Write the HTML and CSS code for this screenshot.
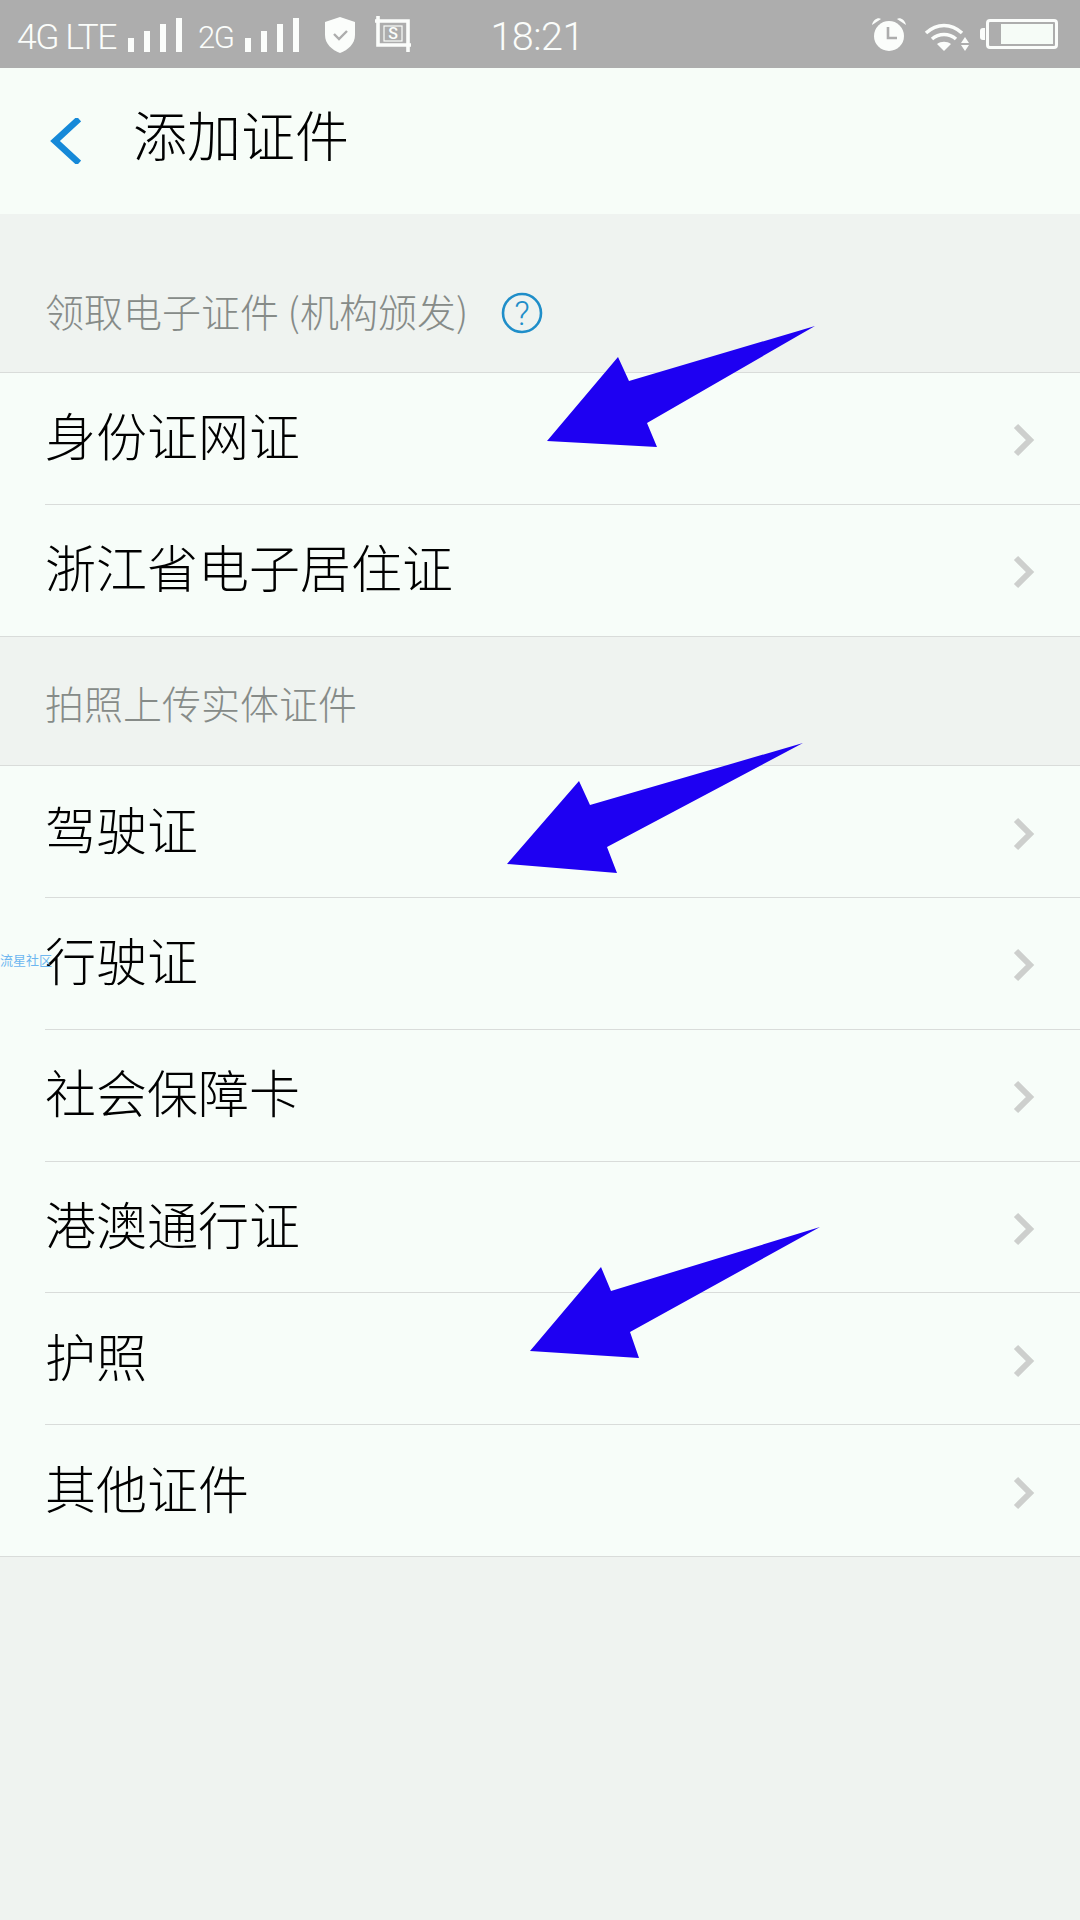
FILE: index.html
```html
<!DOCTYPE html>
<html lang="zh-CN">
  <head>
    <meta charset="UTF-8" />
    <title>添加证件</title>
    <link rel="stylesheet" href="styles.css">
  </head>
  <body>
    <div class="statusbar">
      <div class="status-left">
        <span class="net">4G LTE</span>
        <svg class="bars" viewBox="0 0 54 34"><path d="M0 20h6v14H0zM16 13h6v21h-6zM32 6h6v28h-6zM48 0h6v34h-6z"/></svg>
        <span class="net net2">2G</span>
        <svg class="bars" viewBox="0 0 54 34"><path d="M0 20h6v14H0zM16 13h6v21h-6zM32 6h6v28h-6zM48 0h6v34h-6z"/></svg>
        <svg class="shield" viewBox="0 0 30 36"><path d="M15 0l15 5v13c0 9-7 15-15 18C7 33 0 27 0 18V5z" fill="#fbfdfb"/><path d="M9 17l5 5 8-8" fill="none" stroke="#adadad" stroke-width="2.4"/></svg>
        <svg class="crop" viewBox="0 0 38 38"><path d="M4 1v5h30v27M1 6h3v24h33M34 33v4" fill="none" stroke="#fbfdfb" stroke-width="3.6"/><rect x="10" y="11" width="18" height="15" fill="none" stroke="#fbfdfb" stroke-width="1.2"/><text x="19" y="24" class="crop-s">S</text></svg>
        <span class="time">18:21</span>
      </div>
      <div class="status-right">
        <svg class="alarm" viewBox="0 0 36 34"><circle cx="18" cy="19" r="15" fill="#fbfdfb"/><path d="M1 8c1-5 6-8 9-6zM35 8c-1-5-6-8-9-6z" fill="#fbfdfb"/><path d="M17 10v11h9" fill="none" stroke="#adadad" stroke-width="2.6"/></svg>
        <svg class="wifi" viewBox="0 0 48 34"><path d="M4 15c11-10 25-10 36-0M10 21c7-6 17-6 24 0" fill="none" stroke="#fbfdfb" stroke-width="3.6"/><path d="M15 26c4-3 10-3 14 0l-7 7z" fill="#fbfdfb"/><path d="M43 19l4 6h-8zM43 33l4-6h-8z" fill="#fbfdfb"/></svg>
        <div class="battery"><div class="battery-fill"></div></div>
      </div>
    </div>

    <div class="header">
      <svg class="back" viewBox="0 0 32 46"><path d="M30 1L6 23l24 22" fill="none" stroke="#1689d8" stroke-width="6.5"/></svg>
      <div class="title">添加证件</div>
    </div>

    <div class="section section-first">
      <span>领取电子证件 (机构颁发)</span>
      <svg class="help" viewBox="0 0 42 42"><circle cx="21" cy="21" r="19" fill="none" stroke="#1f8ec9" stroke-width="2.6"/><text x="21" y="33" class="help-q">?</text></svg>
    </div>
    <div class="list">
      <div class="row"><div class="row-inner"><span>身份证网证</span><svg class="chev" viewBox="0 0 22 34"><path d="M3 3l14 14L3 31" fill="none" stroke="#cdcfcd" stroke-width="6"/></svg></div></div>
      <div class="row"><div class="row-inner"><span>浙江省电子居住证</span><svg class="chev" viewBox="0 0 22 34"><path d="M3 3l14 14L3 31" fill="none" stroke="#cdcfcd" stroke-width="6"/></svg></div></div>
    </div>

    <div class="section">
      <span>拍照上传实体证件</span>
    </div>
    <div class="list">
      <div class="row"><div class="row-inner"><span>驾驶证</span><svg class="chev" viewBox="0 0 22 34"><path d="M3 3l14 14L3 31" fill="none" stroke="#cdcfcd" stroke-width="6"/></svg></div></div>
      <div class="row"><div class="row-inner"><span>行驶证</span><svg class="chev" viewBox="0 0 22 34"><path d="M3 3l14 14L3 31" fill="none" stroke="#cdcfcd" stroke-width="6"/></svg></div></div>
      <div class="row"><div class="row-inner"><span>社会保障卡</span><svg class="chev" viewBox="0 0 22 34"><path d="M3 3l14 14L3 31" fill="none" stroke="#cdcfcd" stroke-width="6"/></svg></div></div>
      <div class="row"><div class="row-inner"><span>港澳通行证</span><svg class="chev" viewBox="0 0 22 34"><path d="M3 3l14 14L3 31" fill="none" stroke="#cdcfcd" stroke-width="6"/></svg></div></div>
      <div class="row"><div class="row-inner"><span>护照</span><svg class="chev" viewBox="0 0 22 34"><path d="M3 3l14 14L3 31" fill="none" stroke="#cdcfcd" stroke-width="6"/></svg></div></div>
      <div class="row"><div class="row-inner"><span>其他证件</span><svg class="chev" viewBox="0 0 22 34"><path d="M3 3l14 14L3 31" fill="none" stroke="#cdcfcd" stroke-width="6"/></svg></div></div>
    </div>

    <!-- things drawn over the list -->
    <div class="watermark">流星社区</div>
    <svg class="arrows" viewBox="0 0 1080 1920">
      <polygon points="815,326 629,381 618,357 547,441 657,447 647,423"/>
      <polygon points="803,743 590,805 579,781 507,864 617,873 607,847"/>
      <polygon points="820,1227 611,1291 601,1267 530,1351 639,1358 630,1332"/>
    </svg>
  </body>
</html>
```

FILE: styles.css
```css
* {
  margin: 0;
  padding: 0;
  box-sizing: border-box;
}

html,
body {
  height: 100%;
  width: 100%;
}

body {
  background: #eff3f0;
  font-family: "Noto Sans CJK SC", "Liberation Sans", sans-serif;
  position: relative;
  overflow: hidden;
}

.statusbar {
  height: 68px;
  background: #adadad;
  color: #fbfdfb;
  display: flex;
  align-items: center;
  justify-content: space-between;
  padding: 0 22px 0 17px;
}

.status-left,
.status-right {
  display: flex;
  align-items: center;
}

.net {
  font-family: Roboto, sans-serif;
  font-weight: 300;
  font-size: 35.5px;
  letter-spacing: -1.5px;
  margin-top: 6px;
}

.net2 {
  margin-left: 16px;
  font-size: 31px;
}

.bars {
  width: 54px;
  height: 34px;
  fill: #fbfdfb;
  margin-left: 12px;
  margin-top: 2px;
}

.shield {
  width: 30px;
  height: 36px;
  margin-left: 26px;
  margin-top: 2px;
}

.crop {
  width: 38px;
  height: 38px;
  margin-left: 19px;
}

.crop-s {
  font-family: Roboto, sans-serif;
  font-size: 16px;
  font-weight: 500;
  text-anchor: middle;
  fill: #fbfdfb;
}

.time {
  font-family: Roboto, sans-serif;
  font-weight: 300;
  font-size: 39.5px;
  letter-spacing: -0.5px;
  margin-left: 78px;
  margin-top: 4px;
}

.alarm {
  width: 36px;
  height: 34px;
}

.wifi {
  width: 48px;
  height: 34px;
  margin-left: 15px;
  margin-top: 2px;
}

.battery {
  width: 72px;
  height: 30px;
  border: 3px solid #fbfdfb;
  border-radius: 4px;
  margin-left: 16px;
  padding: 2px;
  display: flex;
  justify-content: flex-end;
  position: relative;
}

.battery::before {
  content: "";
  width: 5px;
  height: 12px;
  background: #fbfdfb;
  border-radius: 3px 0 0 3px;
  position: absolute;
  left: -9px;
  top: 6px;
}

.battery-fill {
  width: 52px;
  background: #f6fcf7;
}

.header {
  height: 146px;
  background: #f7fdf8;
  display: flex;
  align-items: center;
  padding-left: 49px;
}

.back {
  width: 32px;
  height: 46px;
}

.title {
  font-size: 54px;
  font-weight: 300;
  color: #000;
  margin-left: 52px;
  margin-bottom: 16px;
}

.section {
  height: 128.6px;
  display: flex;
  align-items: center;
  padding-left: 45px;
  padding-top: 2px;
  font-size: 39px;
  font-weight: 300;
  color: #868b88;
}

.section-first {
  height: 158px;
  padding-top: 34px;
}

.help {
  width: 42px;
  height: 42px;
  margin-left: 33px;
  margin-top: 6px;
}

.help-q {
  font-family: Roboto, sans-serif;
  font-weight: 300;
  font-size: 34px;
  text-anchor: middle;
  fill: #1f8ec9;
}

.list {
  background: #f7fdf9;
  border-top: 1px solid #d9dcda;
}

.row {
  height: 131.8px;
  padding-left: 45px;
}

.row-inner {
  height: 100%;
  display: flex;
  align-items: center;
  justify-content: space-between;
  padding-right: 45px;
  border-bottom: 1px solid #d9dcda;
  font-size: 51px;
  font-weight: 300;
  color: #000;
}

.row-inner span {
  margin-bottom: 8px;
}

.row:last-child {
  padding-left: 0;
  border-bottom: 1px solid #d9dcda;
}

.row:last-child .row-inner {
  padding-left: 45px;
  border-bottom: none;
}

.chev {
  width: 22px;
  height: 34px;
  margin-top: 4px;
}

.watermark {
  position: absolute;
  left: 0;
  top: 952px;
  font-size: 13px;
  line-height: 16px;
  color: #6db6f0;
}

.arrows {
  position: absolute;
  left: 0;
  top: 0;
  width: 1080px;
  height: 1920px;
  fill: #1e00f2;
}
```
